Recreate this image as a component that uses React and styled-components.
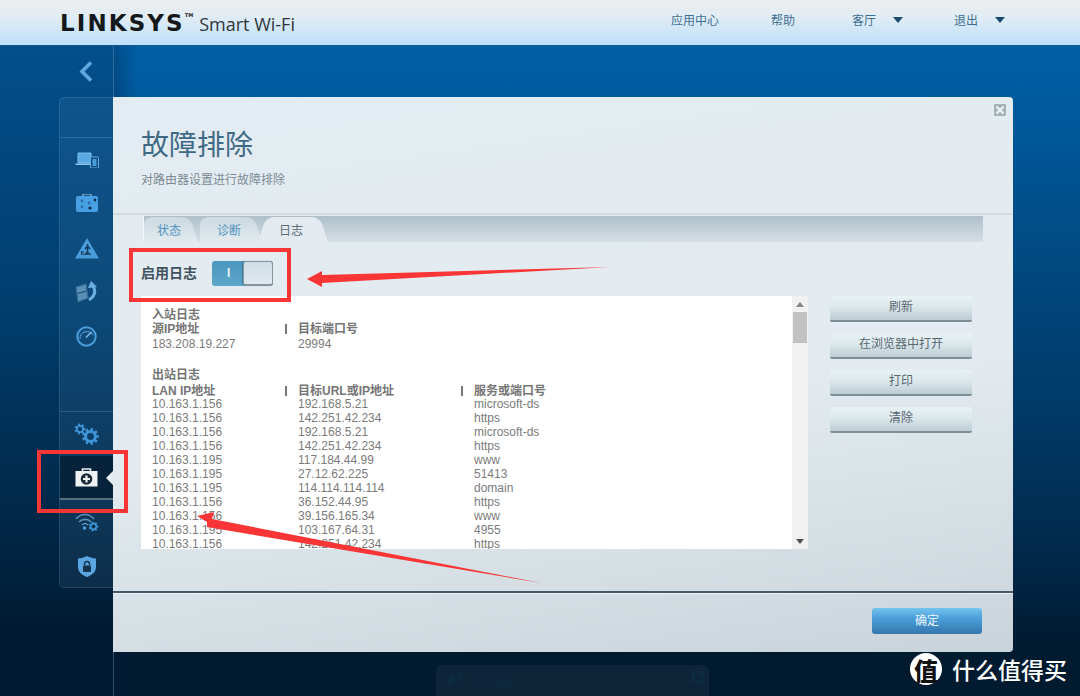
import React from 'react'
import styled, {createGlobalStyle} from 'styled-components'

const GlobalStyle = createGlobalStyle`
    html, body {
        margin: 0;
        padding: 0;
        background: #001a30;
    }
    * {
        box-sizing: border-box;
    }
`

const Page = styled.div`
    position: relative;
    width: 1080px;
    height: 696px;
    overflow: hidden;
    display: flex;
    flex-direction: column;
    font-family: "Liberation Sans", "Noto Sans CJK SC", sans-serif;
    font-size: 12px;
`

const TopBar = styled.header`
    height: 46px;
    flex: none;
    display: flex;
    align-items: center;
    padding-left: 60px;
    background: linear-gradient(180deg, #ececec 0%, #e2edf4 35%, #bde0fb 100%);
    border-bottom: 1px solid #17588c;
`

const LogoMark = styled.span`
    margin-top: 1px;
    font-family: "DejaVu Sans", sans-serif;
    font-weight: 700;
    font-size: 23px;
    letter-spacing: 2.1px;
    color: #15181b;
    line-height: 1;
`

const LogoTm = styled.sup`
    font-size: 5px;
    letter-spacing: 0;
    vertical-align: 14px;
    line-height: 0;
`

const LogoText = styled.span`
    margin-left: 6px;
    margin-top: 3px;
    font-family: "Open Sans", sans-serif;
    font-size: 18px;
    color: #30363b;
`

const TopNav = styled.nav`
    margin-left: auto;
    margin-right: 50px;
    padding-bottom: 6px;
    display: flex;
    align-items: center;
    color: #3e6f92;
`

const TopLink = styled.span`
    display: flex;
    align-items: center;
    width: ${props => props.$width}px;
`

const Caret = styled.i`
    width: 0;
    height: 0;
    margin-left: 17px;
    border-left: 5px solid transparent;
    border-right: 5px solid transparent;
    border-top: 6px solid #1b4a72;
`

const Main = styled.div`
    flex: 1;
    display: flex;
    min-height: 0;
    background: linear-gradient(180deg, #005fa6 0%, #00589a 12%, #012c50 75%, #001a30 92%);
`

const Rail = styled.aside`
    width: 113px;
    flex: none;
    padding-left: 59px;
    background: linear-gradient(180deg, #024f8c 0%, #013e6e 40%, #001b32 90%);
`

const BackButton = styled.div`
    height: 51px;
    display: flex;
    align-items: center;
    justify-content: center;
    padding: 0 1px 1px 0;
`

const NavPanel = styled.div`
    height: 491px;
    display: flex;
    flex-direction: column;
    border: 1px solid rgba(160, 200, 230, 0.14);
    border-right: 0;
    border-radius: 5px 0 0 5px;
    background: rgba(130, 180, 215, 0.1);
`

const NavHead = styled.div`
    height: 40px;
    flex: none;
    border-bottom: 1px solid rgba(170, 205, 230, 0.2);
`

const NavSpacer = styled.div`
    height: 54px;
    flex: none;
    border-bottom: 1px solid rgba(170, 205, 230, 0.2);
`

const NavItem = styled.div`
    position: relative;
    height: 44px;
    flex: none;
    display: flex;
    align-items: center;
    justify-content: center;
    ${props => props.$active && `
        background: #07233b;
        border-bottom: 2px solid #5c6f7e;
    `}
`

const NavPointer = styled.i`
    position: absolute;
    right: 0;
    top: 15px;
    width: 0;
    height: 0;
    border-top: 7px solid transparent;
    border-bottom: 7px solid transparent;
    border-right: 7px solid #e6edf1;
`

const Stage = styled.div`
    position: relative;
    flex: 1;
    padding-top: 51px;
    background: linear-gradient(90deg, rgba(0, 30, 60, 0.3) 0, rgba(0, 30, 60, 0) 24px);
    &::before {
        content: "";
        position: absolute;
        left: 0;
        top: 0;
        bottom: 0;
        width: 1px;
        background: rgba(150, 190, 220, 0.3);
    }
`

const Modal = styled.section`
    position: relative;
    width: 900px;
    height: 555px;
    display: flex;
    flex-direction: column;
    border-radius: 0 4px 4px 0;
    background: linear-gradient(172deg, #e3ecf2 0%, #e3ebf0 55%, #c9d4da 100%);
`

const CloseButton = styled.span`
    position: absolute;
    left: 881px;
    top: 7px;
    width: 12px;
    height: 12px;
    display: flex;
    align-items: center;
    justify-content: center;
    border-radius: 1px;
    background: #a5b3ba;
`

const ModalHead = styled.div`
    height: 118px;
    flex: none;
    padding: 24px 0 0 28px;
    border-bottom: 2px solid #d3dbe0;
`

const Title = styled.h1`
    margin: 0;
    font-family: "Noto Sans CJK SC", sans-serif;
    font-weight: 400;
    font-size: 28px;
    line-height: 44px;
    color: #3f6a85;
`

const Subtitle = styled.p`
    margin: 6px 0 0;
    line-height: 18px;
    color: #7c8a94;
`

const ModalBody = styled.div`
    flex: 1;
    padding-left: 28px;
    min-height: 0;
`

const TabBar = styled.div`
    display: flex;
    height: 26px;
    margin: 1px 30px 0 2px;
    border-left: 1px solid #f2f6f8;
    isolation: isolate;
    background: linear-gradient(180deg, #aebfc8 0%, #d6e0e5 100%);
`

const Tab = styled.div`
    position: relative;
    width: ${props => props.$width}px;
    margin-right: ${props => props.$gap}px;
    padding: 1px 4px 0 0;
    display: flex;
    align-items: center;
    justify-content: center;
    color: ${props => props.$active ? '#5d6c77' : '#4f93c0'};
    &::before, &::after {
        content: "";
        position: absolute;
        z-index: ${props => props.$active ? 0 : -1};
        top: 1px;
        bottom: 0;
        width: 60%;
        background: ${props => props.$active ? '#e3ebf0' : 'linear-gradient(180deg, #ccd9e0, #e2eaef)'};
    }
    &::before {
        left: 0;
        border-radius: 8px 0 0 0;
        transform: skewX(${props => props.$active ? '-18deg' : '0deg'});
        transform-origin: bottom left;
    }
    &::after {
        right: 0;
        border-radius: 0 8px 0 0;
        transform: skewX(18deg);
        transform-origin: bottom right;
    }
`

const TabLabel = styled.span`
    position: relative;
    z-index: 1;
`

const ToggleRow = styled.div`
    height: 54px;
    display: flex;
    align-items: center;
    padding-top: 8px;
`

const ToggleLabel = styled.span`
    width: 71px;
    margin-top: -3px;
    font-size: 14px;
    font-weight: 700;
    color: #41535f;
`

const Toggle = styled.div`
    position: relative;
    width: 61px;
    height: 25px;
    padding-left: 15px;
    display: flex;
    align-items: center;
    border-radius: 3px;
    font-weight: 700;
    color: #e8f3f8;
    background: linear-gradient(180deg, #4c97bd, #5ca7ca);
`

const ToggleKnob = styled.span`
    position: absolute;
    right: 0;
    top: 0;
    width: 30px;
    height: 25px;
    border-radius: 3px;
    border: 1px solid #84959f;
    border-bottom-width: 2px;
    background: linear-gradient(180deg, #cfdfe5, #dfe9ed);
    box-shadow: -1px 0 1px rgba(40, 70, 90, 0.4);
`

const ContentRow = styled.div`
    display: flex;
    gap: 22px;
`

const LogBox = styled.div`
    width: 667px;
    height: 253px;
    display: flex;
    background: #fff;
`

const LogText = styled.div`
    flex: 1;
    overflow: hidden;
    padding: 12px 0 0 11px;
`

const LogHeading = styled.div`
    height: ${props => props.$height}px;
    line-height: 14px;
    font-weight: 700;
    color: #757575;
`

const LogRow = styled.div`
    display: grid;
    grid-template-columns: 133px 176px 1fr;
    height: ${props => props.$height || 14}px;
    line-height: 14px;
    margin-bottom: ${props => props.$gap || 0}px;
    font-weight: ${props => props.$head ? 700 : 400};
    color: ${props => props.$head ? '#757575' : '#7b7b7b'};
`

const LogCell = styled.span`
    padding-left: ${props => props.$first ? 0 : 13}px;
    background: ${props => props.$divider ? 'linear-gradient(#757575, #757575) left 2px / 2px 10px no-repeat' : 'none'};
`

const Scrollbar = styled.div`
    position: relative;
    width: 16px;
    flex: none;
    padding: 16px 1px;
    background: #f1f1f1;
`

const ScrollThumb = styled.div`
    height: 31px;
    background: #c1c1c1;
`

const ScrollArrow = styled.i`
    position: absolute;
    left: 4px;
    ${props => props.$down ? 'bottom: 5px;' : 'top: 6px;'}
    width: 0;
    height: 0;
    border-left: 4px solid transparent;
    border-right: 4px solid transparent;
    ${props => props.$down ? 'border-top: 5px solid #505050;' : 'border-bottom: 5px solid #7f8a90;'}
`

const ActionColumn = styled.div`
    display: flex;
    flex-direction: column;
    gap: 11.5px;
`

const ActionButton = styled.button`
    width: 142px;
    height: 25.5px;
    padding: 0 0 4px;
    border: 0;
    border-bottom: 2px solid #7d8e97;
    border-radius: 2px;
    font: inherit;
    color: #5a6871;
    background: linear-gradient(180deg, #e8f2f4 0%, #dce8ec 45%, #bccdd3 100%);
`

const ModalFoot = styled.div`
    height: 61px;
    flex: none;
    display: flex;
    align-items: center;
    justify-content: flex-end;
    padding: 0 31px 4px 0;
    border-top: 2px solid #43596a;
    box-shadow: inset 0 1px 0 #edf2f4;
`

const OkButton = styled.button`
    width: 110px;
    height: 26px;
    padding: 0 0 2px;
    border: 0;
    border-radius: 3px;
    font: inherit;
    color: #eaf6fd;
    background: linear-gradient(180deg, #74c4ee 0%, #4a9fd9 40%, #3478ad 100%);
`

const GhostToast = styled.div`
    position: absolute;
    left: 323px;
    top: 619px;
    width: 273px;
    height: 40px;
    display: flex;
    align-items: flex-start;
    padding: 6px 5px 0 9px;
    border-radius: 6px 6px 0 0;
    color: #0c2a40;
    background: #0e2438;
`

const ToastText = styled.span`
    margin: 2px auto 0 12px;
`

const Watermark = styled.div`
    position: absolute;
    left: 910px;
    top: 653px;
    display: flex;
    align-items: center;
    gap: 10px;
    font-family: "Noto Sans CJK SC", sans-serif;
    font-weight: 500;
    font-size: 23px;
    line-height: 31px;
    color: #fff;
`

const WatermarkBadge = styled.span`
    width: 32px;
    height: 32px;
    display: flex;
    align-items: center;
    justify-content: center;
    border-radius: 50%;
    font-weight: 900;
    font-size: 24px;
    color: #111;
    background: #fff;
`

const RedBox = styled.div`
    position: absolute;
    border: 4px solid #fa3535;
`

const ToggleMark = styled(RedBox)`
    left: 129px;
    top: 248px;
    width: 162px;
    height: 54px;
`

const NavMark = styled(RedBox)`
    left: 37px;
    top: 450px;
    width: 91px;
    height: 63px;
`

const ArrowLayer = styled.svg`
    position: absolute;
    left: 0;
    top: 0;
    pointer-events: none;
`

const gearPath = (cx, cy, r, teeth) => {
    const step = Math.PI / teeth
    const points = []
    for (let i = 0; i < teeth * 2; i++) {
        const radius = i % 2 === 0 ? r : r * 0.76
        const a0 = i * step - step * 0.5
        const a1 = i * step + step * 0.5
        points.push([cx + radius * Math.cos(a0), cy + radius * Math.sin(a0)])
        points.push([cx + radius * Math.cos(a1), cy + radius * Math.sin(a1)])
    }
    const hole = r * 0.4
    return 'M' + points.map(p => p[0].toFixed(2) + ' ' + p[1].toFixed(2)).join('L') + 'Z'
        + `M${cx - hole} ${cy}a${hole} ${hole} 0 1 0 ${hole * 2} 0a${hole} ${hole} 0 1 0 ${-hole * 2} 0Z`
}

const DeviceIcon = () => (
    <svg width="24" height="16" viewBox="0 0 24 16">
        <path d="M3 1h13v10H3z" fill="#5aa9e4" stroke="#7cc0ee"/>
        <path d="M0 11.5h17v1.5H1z" fill="#8ccaf2"/>
        <rect x="15.5" y="5" width="8" height="11" rx="1" fill="#0f4a78" stroke="#62aee6"/>
        <rect x="17.5" y="7" width="4" height="7" fill="#4a9ddc"/>
    </svg>
)

const ToolboxIcon = () => (
    <svg width="24" height="20" viewBox="0 0 24 20">
        <path d="M8 2V0h8v2" fill="none" stroke="#7fa9c6" strokeWidth="1.5"/>
        <rect x="1" y="2" width="22" height="16" rx="2" fill="#479fe4"/>
        <circle cx="7" cy="7" r="1.4" fill="#2a6ea8"/>
        <circle cx="14" cy="9" r="1.4" fill="#2a6ea8"/>
        <circle cx="7" cy="13" r="1.4" fill="#2a6ea8"/>
        <circle cx="15" cy="14" r="1.6" fill="#0d2c48"/>
        <circle cx="20" cy="6" r="1.4" fill="#0d2c48"/>
    </svg>
)

const WarningIcon = () => (
    <svg width="24" height="21" viewBox="0 0 24 21">
        <path d="M12 0L24 20.5H0z" fill="#4a9ddc"/>
        <path d="M12.5 6v11M10 11l2.5-3 2.500 3M9.5 17l3-3 3 3" stroke="#123c60" strokeWidth="1.5" fill="none"/>
        <path d="M6.5 13v4M8 13v4" stroke="#123c60"/>
    </svg>
)

const RestoreIcon = () => (
    <svg width="24" height="22" viewBox="0 0 24 22">
        <path d="M1 6l10-3 2 14-10 4z" fill="#5a8fb5" stroke="#2f6a96"/>
        <path d="M2.5 12.500l9-2.500" stroke="#14466e"/>
        <path d="M18 5c3 5 2 10-4 14" fill="none" stroke="#6bb0e0" strokeWidth="3"/>
        <path d="M16 0l6 6-9 1z" fill="#6bb0e0"/>
    </svg>
)

const GaugeIcon = () => (
    <svg width="21" height="21" viewBox="0 0 21 21">
        <circle cx="10.5" cy="10.5" r="9.2" fill="#0f4a78" stroke="#4a9ddc" strokeWidth="2"/>
        <path d="M4 13a7 7 0 0 1 13-4" fill="none" stroke="#5fa9dd"/>
        <path d="M10 11.5L15.5 6" stroke="#7bbce8" strokeWidth="1.6"/>
    </svg>
)

const GearsIcon = () => (
    <svg width="26" height="23" viewBox="0 0 26 23">
        <path d={gearPath(6, 6, 5.5, 7)} fill="#3d94d8" fillRule="evenodd"/>
        <path d={gearPath(16.5, 13.5, 8.5, 9)} fill="#3d94d8" fillRule="evenodd"/>
    </svg>
)

const MedkitIcon = () => (
    <svg width="23" height="19" viewBox="0 0 23 19">
        <path d="M7.5 3V1h8v2" fill="none" stroke="#e8eef1" strokeWidth="1.6"/>
        <rect x="0.5" y="3" width="22" height="15.5" fill="#f0f3f4"/>
        <circle cx="11.5" cy="11" r="5.8" fill="#1a2a36"/>
        <path d="M11.5 7.5v7M8 11h7" stroke="#f0f3f4" strokeWidth="2.2"/>
    </svg>
)

const WifiIcon = () => (
    <svg width="24" height="20" viewBox="0 0 24 20">
        <path d="M1 7c5-6 13-6 18 0" fill="none" stroke="#5a93bd" strokeWidth="1.6"/>
        <path d="M4 10c3.5-3.5 9-3.5 12 0" fill="none" stroke="#5a93bd" strokeWidth="1.6"/>
        <path d="M7 13c2-2 4-2 6 0" fill="none" stroke="#5a93bd" strokeWidth="1.6"/>
        <circle cx="9.5" cy="16" r="1.8" fill="#4a9ddc"/>
        <path d={gearPath(18.5, 14.5, 5, 7)} fill="#3d94d8" fillRule="evenodd"/>
    </svg>
)

const ShieldIcon = () => (
    <svg width="18" height="21" viewBox="0 0 18 21">
        <path d="M0 2.5C3 2.500 6 1.500 9 0c3 1.500 6 2.500 9 2.500V11c0 5-4 8-9 10-5-2-9-5-9-10z" fill="#5aa6e2"/>
        <rect x="5" y="9.5" width="8" height="6.5" rx="1" fill="#14344e"/>
        <path d="M6.5 9.5V8a2.500 2.500 0 0 1 5 0v1.500" fill="none" stroke="#14344e" strokeWidth="1.4"/>
    </svg>
)

const upperIcons = [DeviceIcon, ToolboxIcon, WarningIcon, RestoreIcon, GaugeIcon]

const outbound = [
    ['10.163.1.156', '192.168.5.21', 'microsoft-ds'],
    ['10.163.1.156', '142.251.42.234', 'https'],
    ['10.163.1.156', '192.168.5.21', 'microsoft-ds'],
    ['10.163.1.156', '142.251.42.234', 'https'],
    ['10.163.1.195', '117.184.44.99', 'www'],
    ['10.163.1.195', '27.12.62.225', '51413'],
    ['10.163.1.195', '114.114.114.114', 'domain'],
    ['10.163.1.156', '36.152.44.95', 'https'],
    ['10.163.1.156', '39.156.165.34', 'www'],
    ['10.163.1.195', '103.167.64.31', '4955'],
    ['10.163.1.156', '142.251.42.234', 'https'],
]

const App = () => {
    return (
        <Page>
            <GlobalStyle/>
            <TopBar>
                <LogoMark>LINKSYS<LogoTm>TM</LogoTm></LogoMark>
                <LogoText>Smart Wi-Fi</LogoText>
                <TopNav>
                    <TopLink $width={100}>应用中心</TopLink>
                    <TopLink $width={81}>帮助</TopLink>
                    <TopLink $width={102}>客厅<Caret/></TopLink>
                    <TopLink $width={76}>退出<Caret/></TopLink>
                </TopNav>
            </TopBar>
            <Main>
                <Rail>
                    <BackButton>
                        <svg width="14" height="21" viewBox="0 0 14 21">
                            <path d="M12 1.5L3 10.5l9 9" fill="none" stroke="#5fa8dc" strokeWidth="3.6"/>
                        </svg>
                    </BackButton>
                    <NavPanel>
                        <NavHead/>
                        {upperIcons.map((Icon, i) => <NavItem key={i}><Icon/></NavItem>)}
                        <NavSpacer/>
                        <NavItem><GearsIcon/></NavItem>
                        <NavItem $active><MedkitIcon/><NavPointer/></NavItem>
                        <NavItem><WifiIcon/></NavItem>
                        <NavItem><ShieldIcon/></NavItem>
                    </NavPanel>
                </Rail>
                <Stage>
                    <Modal>
                        <CloseButton>
                            <svg width="10" height="10" viewBox="0 0 10 10">
                                <path d="M1.5 1.5l7 7M8.5 1.5l-7 7" stroke="#eef2f4" strokeWidth="2.2"/>
                            </svg>
                        </CloseButton>
                        <ModalHead>
                            <Title>故障排除</Title>
                            <Subtitle>对路由器设置进行故障排除</Subtitle>
                        </ModalHead>
                        <ModalBody>
                            <TabBar>
                                <Tab $width={54} $gap={2}><TabLabel>状态</TabLabel></Tab>
                                <Tab $width={62} $gap={-4}><TabLabel>诊断</TabLabel></Tab>
                                <Tab $width={70} $gap={0} $active><TabLabel>日志</TabLabel></Tab>
                            </TabBar>
                            <ToggleRow>
                                <ToggleLabel>启用日志</ToggleLabel>
                                <Toggle>I<ToggleKnob/></Toggle>
                            </ToggleRow>
                            <ContentRow>
                                <LogBox>
                                    <LogText>
                                        <LogHeading $height={14}>入站日志</LogHeading>
                                        <LogRow $head $height={15}>
                                            <LogCell $first>源IP地址</LogCell>
                                            <LogCell $divider>目标端口号</LogCell>
                                            <span/>
                                        </LogRow>
                                        <LogRow $gap={17}>
                                            <LogCell $first>183.208.19.227</LogCell>
                                            <LogCell>29994</LogCell>
                                            <span/>
                                        </LogRow>
                                        <LogHeading $height={16}>出站日志</LogHeading>
                                        <LogRow $head $height={13}>
                                            <LogCell $first>LAN IP地址</LogCell>
                                            <LogCell $divider>目标URL或IP地址</LogCell>
                                            <LogCell $divider>服务或端口号</LogCell>
                                        </LogRow>
                                        {outbound.map((row, i) => (
                                            <LogRow key={i}>
                                                <LogCell $first>{row[0]}</LogCell>
                                                <LogCell>{row[1]}</LogCell>
                                                <LogCell>{row[2]}</LogCell>
                                            </LogRow>
                                        ))}
                                    </LogText>
                                    <Scrollbar>
                                        <ScrollArrow/>
                                        <ScrollThumb/>
                                        <ScrollArrow $down/>
                                    </Scrollbar>
                                </LogBox>
                                <ActionColumn>
                                    <ActionButton>刷新</ActionButton>
                                    <ActionButton>在浏览器中打开</ActionButton>
                                    <ActionButton>打印</ActionButton>
                                    <ActionButton>清除</ActionButton>
                                </ActionColumn>
                            </ContentRow>
                        </ModalBody>
                        <ModalFoot>
                            <OkButton>确定</OkButton>
                        </ModalFoot>
                    </Modal>
                    <GhostToast>
                        <svg width="20" height="17" viewBox="0 0 24 22">
                            <path d="M1 6l10-3 2 14-10 4z" fill="#0c2a40"/>
                            <path d="M18 5c3 5 2 10-4 14" fill="none" stroke="#0c2a40" strokeWidth="3"/>
                            <path d="M16 0l6 6-9 1z" fill="#0c2a40"/>
                        </svg>
                        <ToastText>优先级</ToastText>
                        <svg width="12" height="12" viewBox="0 0 12 12">
                            <rect width="12" height="12" rx="1" fill="#0c2a40"/>
                            <path d="M3 3l6 6M9 3l-6 6" stroke="#0e2438" strokeWidth="2"/>
                        </svg>
                    </GhostToast>
                </Stage>
            </Main>
            <ToggleMark/>
            <NavMark/>
            <ArrowLayer width="1080" height="696" viewBox="0 0 1080 696">
                <polygon points="307,279 322,271 322,275 610,267 322,283 322,287" fill="#fa3535"/>
                <polygon points="197,516 214,512 212,519 541,583 207,527 207,522" fill="#fa3535"/>
            </ArrowLayer>
            <Watermark>
                <WatermarkBadge>值</WatermarkBadge>
                什么值得买
            </Watermark>
        </Page>
    )
}

export default App
